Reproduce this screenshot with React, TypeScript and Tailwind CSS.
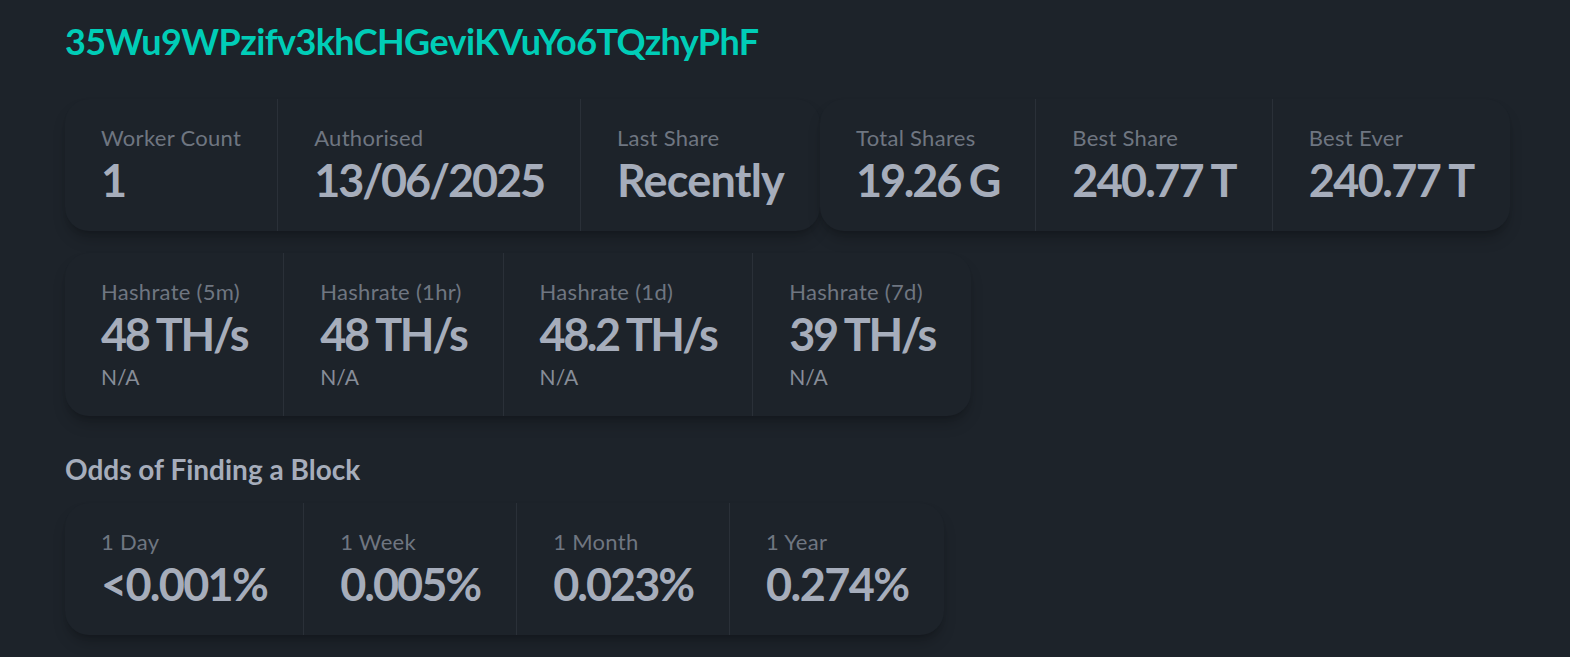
import React from "react";

type Stat = { title: string; value: string; tr: string; desc?: string };

const row1a: Stat[] = [
  { title: "Worker Count", value: "1", tr: "tracking-[-1.3px]" },
  { title: "Authorised", value: "13/06/2025", tr: "tracking-[-2.1px]" },
  { title: "Last Share", value: "Recently", tr: "tracking-[-0.8px]" },
];
const row1b: Stat[] = [
  { title: "Total Shares", value: "19.26 G", tr: "tracking-[-2.2px]" },
  { title: "Best Share", value: "240.77 T", tr: "tracking-[-1.8px]" },
  { title: "Best Ever", value: "240.77 T", tr: "tracking-[-1.6px]" },
];
const row2: Stat[] = [
  { title: "Hashrate (5m)", value: "48 TH/s", tr: "tracking-[-2.3px]", desc: "N/A" },
  { title: "Hashrate (1hr)", value: "48 TH/s", tr: "tracking-[-2.3px]", desc: "N/A" },
  { title: "Hashrate (1d)", value: "48.2 TH/s", tr: "tracking-[-2.5px]", desc: "N/A" },
  { title: "Hashrate (7d)", value: "39 TH/s", tr: "tracking-[-2.4px]", desc: "N/A" },
];
const row3: Stat[] = [
  { title: "1 Day", value: "<0.001%", tr: "tracking-[-1.7px]" },
  { title: "1 Week", value: "0.005%", tr: "tracking-[-2px]" },
  { title: "1 Month", value: "0.023%", tr: "tracking-[-2px]" },
  { title: "1 Year", value: "0.274%", tr: "tracking-[-1.6px]" },
];

function Stats({ items }: { items: Stat[] }) {
  return (
    <div className="inline-flex rounded-[24px] bg-[#1d232a] shadow-[0_10px_15px_-3px_rgba(0,0,0,0.22),0_4px_6px_-4px_rgba(0,0,0,0.22)]">
      {items.map((s, i) => (
        <div
          key={i}
          className={
            "flex flex-col px-[36px] py-[24px] " +
            (i > 0 ? "border-l border-[#2a3038]" : "")
          }
        >
          <div className="whitespace-nowrap text-[22px] leading-[30px] tracking-[0.3px] text-[#6f7681]">
            {s.title}
          </div>
          <div
            className={
              "whitespace-nowrap text-[45px] font-bold leading-[54px] text-[#a6adbb] " +
              s.tr
            }
          >
            {s.value}
          </div>
          {s.desc && (
            <div className="whitespace-nowrap text-[21px] leading-[31px] text-[#878d98]">
              {s.desc}
            </div>
          )}
        </div>
      ))}
    </div>
  );
}

export default function App() {
  return (
    <div
      className="min-h-screen w-full bg-[#1d232a] pl-[65px] pt-[17px] pb-[40px]"
      style={{ fontFamily: "Lato, 'Liberation Sans', sans-serif" }}
    >
      <div className="text-[36px] font-bold leading-[48px] tracking-[-0.6px] text-[#00cdb7]">
        35Wu9WPzifv3khCHGeviKVuYo6TQzhyPhF
      </div>
      <div className="mt-[34px] flex flex-wrap">
        <Stats items={row1a} />
        <Stats items={row1b} />
      </div>
      <div className="mt-[22px] flex">
        <Stats items={row2} />
      </div>
      <div className="mt-[35px] text-[28px] font-bold leading-[36px] text-[#a6adbb]">
        Odds of Finding a Block
      </div>
      <div className="mt-[16px] flex">
        <Stats items={row3} />
      </div>
    </div>
  );
}
